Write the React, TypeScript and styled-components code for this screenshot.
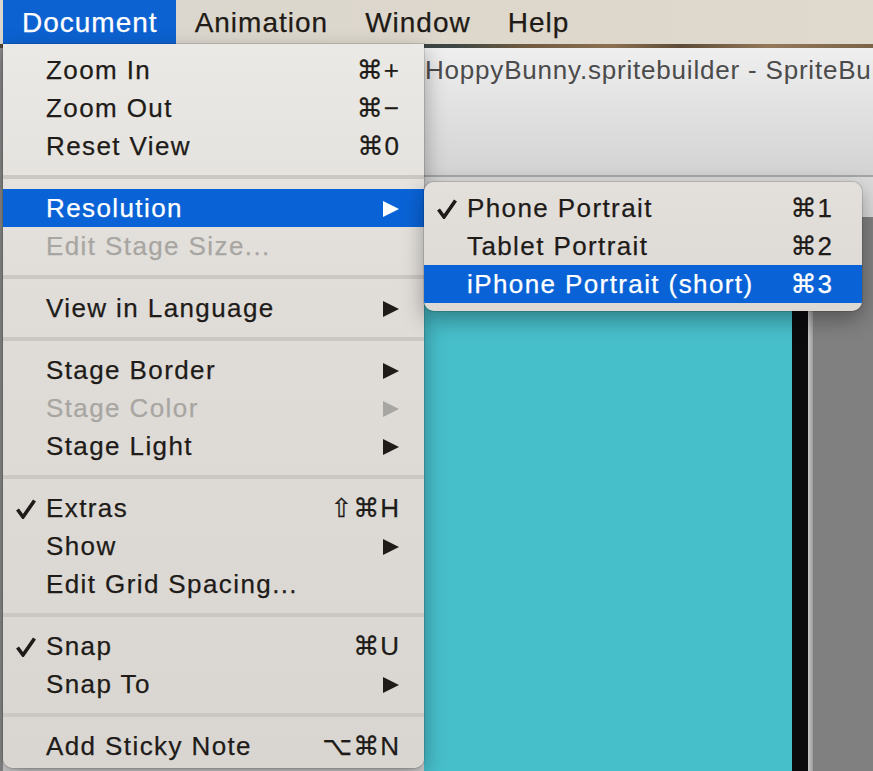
import React from 'react';
import styled, { createGlobalStyle } from 'styled-components';

const FONT = `"Liberation Sans", "DejaVu Sans", Arial, sans-serif`;

const Global = createGlobalStyle`
  html, body { margin: 0; padding: 0; width: 873px; height: 771px; overflow: hidden; background: #8a8a8a; }
  * { box-sizing: border-box; }
`;

const Screen = styled.div`
  position: relative;
  width: 873px;
  height: 771px;
  overflow: hidden;
  display: flex;
  flex-direction: column;
  font-family: ${FONT};
  background: #8a8a8a;
`;

const MenuBar = styled.div`
  flex: none;
  height: 44px;
  display: flex;
  align-items: stretch;
  padding-left: 3px;
  background: linear-gradient(90deg, #dbd7cf 0%, #ddd7cc 55%, #e0d9cd 100%);
`;

const MenuTitle = styled.div<{ $active?: boolean }>`
  display: flex;
  align-items: center;
  padding: 2px 18px 0 19px;
  font-size: 28px;
  letter-spacing: 1px;
  -webkit-text-stroke: 0.25px currentColor;
  color: ${(p) => (p.$active ? '#ffffff' : '#1f1b16')};
  background: ${(p) => (p.$active ? '#0c62d1' : 'transparent')};
`;

const WallpaperStrip = styled.div`
  flex: none;
  height: 4px;
  background: linear-gradient(
    90deg,
    #4d4437 0%,
    #3d4645 52%,
    #6f5a41 60%,
    #8b7150 70%,
    #5c4b38 78%,
    #94795a 88%,
    #7a6347 100%
  );
`;

const Desktop = styled.div`
  flex: 1;
  display: flex;
  min-height: 0;
`;

const DesktopEdge = styled.div`
  flex: none;
  width: 3px;
  background: #8b8b8b;
`;

const Window = styled.div`
  flex: 1;
  display: flex;
  flex-direction: column;
  min-width: 0;
  background: #dadada;
`;

const TitleBar = styled.div`
  flex: none;
  height: 129px;
  padding: 7px 0 0 422px;
  background: linear-gradient(180deg, #efefef 0%, #e2e2e2 45%, #d3d3d3 100%);
  border-bottom: 2px solid #a6a6a6;
  overflow: hidden;
`;

const WindowTitle = styled.div`
  font-size: 26px;
  line-height: 30px;
  letter-spacing: 0.8px;
  color: #4b4b4b;
  white-space: nowrap;
`;

const TabStrip = styled.div`
  flex: none;
  height: 40px;
  background: #dadada;
`;

const StageArea = styled.div`
  flex: 1;
  display: flex;
  background: #808080;
`;

const LeftPanel = styled.div`
  flex: none;
  width: 421px;
  background: #d4d4d4;
`;

const Stage = styled.div`
  flex: none;
  width: 368px;
  background: #47bfcb;
`;

const Bezel = styled.div`
  flex: none;
  width: 16px;
  background: #0b0b0d;
`;

const BezelEdge = styled.div`
  flex: none;
  width: 5px;
  background: linear-gradient(90deg, #c8c8c8, #9c9c9c);
`;

const DropMenu = styled.div`
  position: absolute;
  left: 3px;
  top: 44px;
  width: 421px;
  padding: 7px 0 3px;
  border-radius: 0 0 10px 10px;
  background: linear-gradient(180deg, #ebe9e5 0%, #e0ddd9 35%, #d9d6d2 100%);
  box-shadow: 0 8px 22px rgba(0, 0, 0, 0.35), 0 0 0 1px rgba(0, 0, 0, 0.12);
`;

const SubMenu = styled.div`
  position: absolute;
  left: 424px;
  top: 182px;
  width: 438px;
  padding: 7px 0 8px;
  border-radius: 10px;
  overflow: hidden;
  background: linear-gradient(180deg, #e3e0dc 0%, #dcd9d4 100%);
  box-shadow: 0 8px 22px rgba(0, 0, 0, 0.35), 0 0 0 1px rgba(0, 0, 0, 0.12);
`;

const Row = styled.div<{ $active?: boolean; $disabled?: boolean; $right: number }>`
  height: 38px;
  display: grid;
  grid-template-columns: 43px 1fr auto;
  align-items: center;
  padding-right: ${(p) => p.$right}px;
  padding-top: 1px;
  font-size: 26px;
  letter-spacing: 1.4px;
  -webkit-text-stroke: 0.25px currentColor;
  white-space: nowrap;
  color: ${(p) => (p.$active ? '#ffffff' : p.$disabled ? '#a8a6a2' : '#1e1b18')};
  background: ${(p) => (p.$active ? '#0a63d6' : 'transparent')};
`;

const Gutter = styled.div`
  display: flex;
  align-items: center;
  padding-left: 13px;
`;

const Label = styled.span``;

const Shortcut = styled.span`
  letter-spacing: 1px;
  margin-right: -1px;
`;

const Separator = styled.div`
  height: 4px;
  margin: 10px 0;
  background: #cbc8c4;
`;

const CheckMark = () => (
  <svg width="20" height="20" viewBox="0 0 20 20">
    <path d="M1.5 10.5 L7 18 L18.5 1.5" fill="none" stroke="currentColor" strokeWidth="3.6" strokeLinejoin="miter" />
  </svg>
);

const SubArrow = () => (
  <svg width="16" height="16" viewBox="0 0 16 16">
    <polygon points="0,0 16,8 0,16" fill="currentColor" />
  </svg>
);

type Item =
  | 'sep'
  | {
      label: string;
      sc?: string;
      sub?: boolean;
      active?: boolean;
      disabled?: boolean;
      checked?: boolean;
    };

const mainItems: Item[] = [
  { label: 'Zoom In', sc: '⌘+' },
  { label: 'Zoom Out', sc: '⌘−' },
  { label: 'Reset View', sc: '⌘0' },
  'sep',
  { label: 'Resolution', sub: true, active: true },
  { label: 'Edit Stage Size...', disabled: true },
  'sep',
  { label: 'View in Language', sub: true },
  'sep',
  { label: 'Stage Border', sub: true },
  { label: 'Stage Color', sub: true, disabled: true },
  { label: 'Stage Light', sub: true },
  'sep',
  { label: 'Extras', checked: true, sc: '⇧⌘H' },
  { label: 'Show', sub: true },
  { label: 'Edit Grid Spacing...' },
  'sep',
  { label: 'Snap', checked: true, sc: '⌘U' },
  { label: 'Snap To', sub: true },
  'sep',
  { label: 'Add Sticky Note', sc: '⌥⌘N' },
];

const subItems: Item[] = [
  { label: 'Phone Portrait', checked: true, sc: '⌘1' },
  { label: 'Tablet Portrait', sc: '⌘2' },
  { label: 'iPhone Portrait (short)', sc: '⌘3', active: true },
];

const MenuItems = ({ items, right }: { items: Item[]; right: number }) => (
  <>
    {items.map((it, i) =>
      it === 'sep' ? (
        <Separator key={i} />
      ) : (
        <Row key={i} $active={it.active} $disabled={it.disabled} $right={right}>
          <Gutter>{it.checked ? <CheckMark /> : null}</Gutter>
          <Label>{it.label}</Label>
          {it.sub ? <SubArrow /> : it.sc ? <Shortcut>{it.sc}</Shortcut> : <span />}
        </Row>
      )
    )}
  </>
);

export default function App() {
  return (
    <>
      <Global />
      <Screen>
        <MenuBar>
          <MenuTitle $active>Document</MenuTitle>
          <MenuTitle>Animation</MenuTitle>
          <MenuTitle>Window</MenuTitle>
          <MenuTitle>Help</MenuTitle>
        </MenuBar>
        <WallpaperStrip />
        <Desktop>
          <DesktopEdge />
          <Window>
            <TitleBar>
              <WindowTitle>HoppyBunny.spritebuilder - SpriteBuilder</WindowTitle>
            </TitleBar>
            <TabStrip />
            <StageArea>
              <LeftPanel />
              <Stage />
              <Bezel />
              <BezelEdge />
            </StageArea>
          </Window>
        </Desktop>
        <DropMenu>
          <MenuItems items={mainItems} right={25} />
        </DropMenu>
        <SubMenu>
          <MenuItems items={subItems} right={30} />
        </SubMenu>
      </Screen>
    </>
  );
}
